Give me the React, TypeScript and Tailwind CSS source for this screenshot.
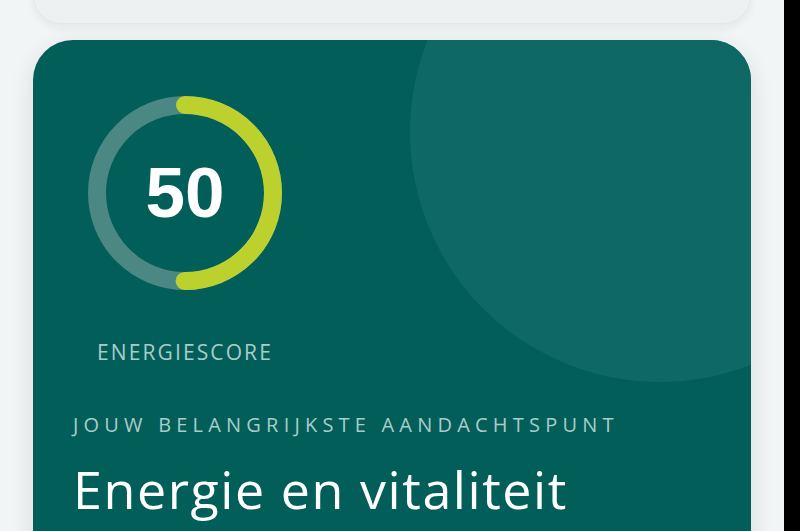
export default function App() {
  const r = 88;
  const c = 2 * Math.PI * r;
  const score = 50;

  return (
    <div className="flex h-[531px] w-[800px] overflow-hidden bg-[#f2f5f5]">
      <div className="flex w-[784px] flex-col gap-4 px-[33px]">
        {/* vorige kaart, alleen de onderkant zichtbaar */}
        <div className="-mt-[40px] h-[64px] shrink-0 rounded-b-[28px] border border-[#e3e8e8] bg-[#edf1f1] shadow-[0_4px_10px_rgba(0,40,40,0.06)]" />

        {/* energiescore kaart */}
        <div className="relative h-[600px] shrink-0 overflow-hidden rounded-[40px] bg-[#025e59] px-10 pt-[56px] shadow-[0_8px_24px_rgba(0,40,40,0.12)]">
          <div className="absolute left-[377px] top-[-158px] h-[500px] w-[500px] rounded-full bg-[#0e6964]" />

          <div className="relative flex w-[224px] flex-col items-center">
            <div className="relative h-[194px] w-[194px]">
              <svg width="194" height="194" viewBox="0 0 194 194" className="-rotate-90">
                <circle cx="97" cy="97" r={r} fill="none" stroke="#4b8783" strokeWidth="18" />
                <circle
                  cx="97"
                  cy="97"
                  r={r}
                  fill="none"
                  stroke="#bdd12e"
                  strokeWidth="18"
                  strokeLinecap="round"
                  strokeDasharray={`${(c * score) / 100} ${c}`}
                />
              </svg>
              <div className="absolute inset-0 flex items-center justify-center font-['Liberation_Sans',sans-serif] text-[71px] font-bold text-white">
                {score}
              </div>
            </div>
            <div className="mt-[47px] font-['Open_Sans',sans-serif] text-[21px] tracking-[0.1em] text-[#a9ccc9]">
              ENERGIESCORE
            </div>
          </div>

          <div className="relative mt-[41px] font-['Open_Sans',sans-serif] text-[20px] tracking-[0.26em] text-[#a9ccc9]">
            JOUW BELANGRIJKSTE AANDACHTSPUNT
          </div>
          <h1 className="relative mt-[16px] font-['Open_Sans',sans-serif] text-[52px] leading-tight font-medium tracking-[0.03em] text-white">
            Energie en vitaliteit
          </h1>
        </div>
      </div>
      <div className="w-4 bg-black" />
    </div>
  );
}
